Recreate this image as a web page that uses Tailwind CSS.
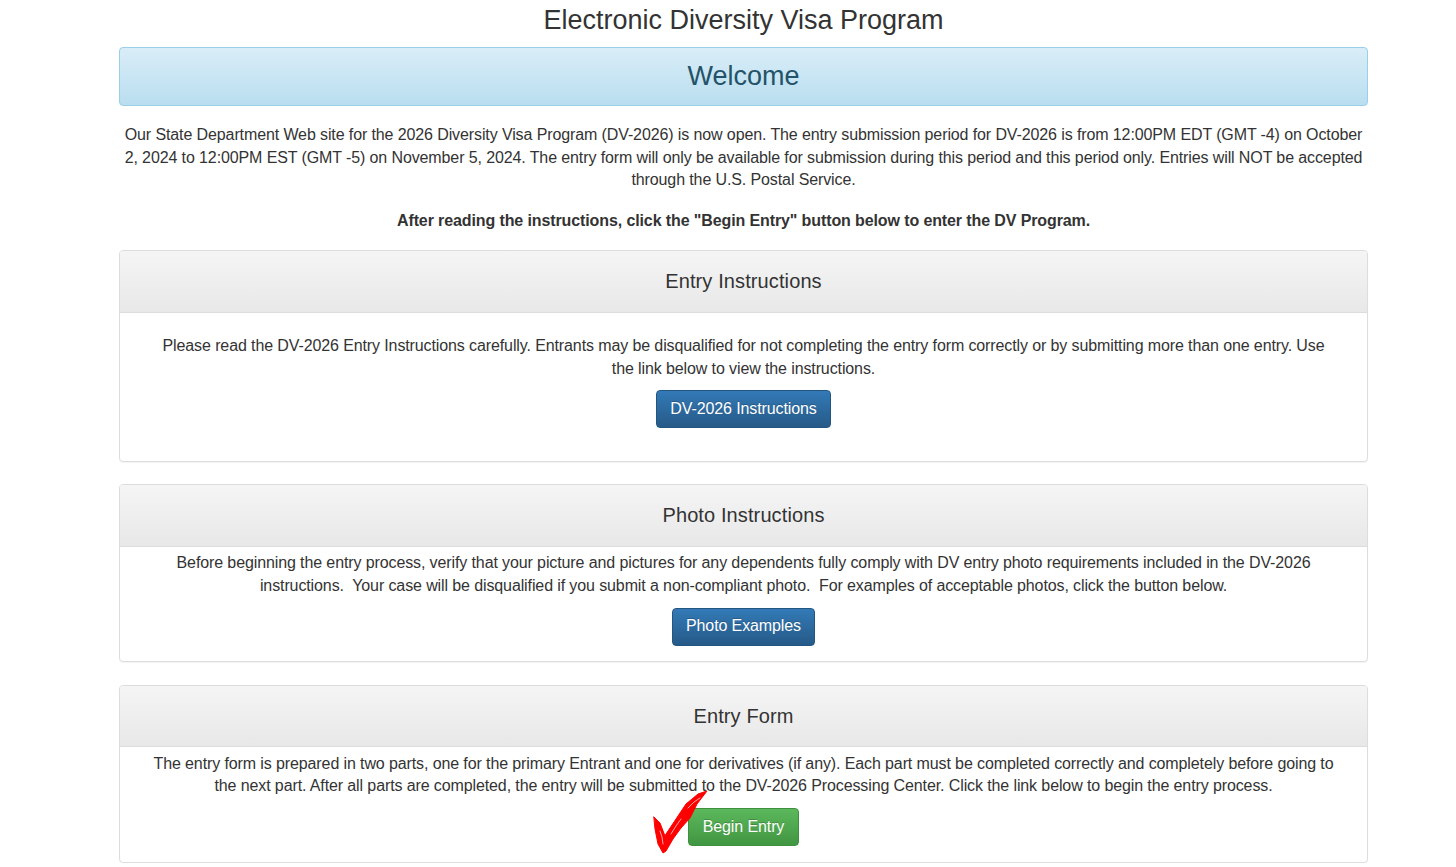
<!DOCTYPE html>
<html lang="en">
<head>
    <meta charset="UTF-8">
    <title>Electronic Diversity Visa Program</title>
    <script src="https://cdn.jsdelivr.net/npm/@tailwindcss/browser@4"></script>
</head>
<body class="bg-white text-[#333] text-[16px] leading-[22.86px] tracking-[-0.11px] font-['Liberation_Sans',Arial,sans-serif]">
    <div class="w-[1249px] ml-[119px] text-center">
        <!-- Title -->
        <h1 class="h-[47px] pt-[5px] text-[27px] leading-[31px] tracking-normal font-normal">Electronic Diversity Visa Program</h1>

        <!-- Welcome -->
        <div class="h-[59px] rounded-[4px] border border-[#9acfea] bg-gradient-to-b from-[#d9edf7] to-[#b9def0] text-[#245269] text-[27px] leading-[56px] tracking-normal">Welcome</div>

        <p class="mt-[18px] px-[1px] leading-[22.5px]">Our State Department Web site for the 2026 Diversity Visa Program (DV-2026) is now open. The entry submission period for DV-2026 is from 12:00PM EDT (GMT -4) on October 2, 2024 to 12:00PM EST (GMT -5) on November 5, 2024. The entry form will only be available for submission during this period and this period only. Entries will NOT be accepted through the U.S. Postal Service.</p>
        <p class="mt-[18.58px] font-bold">After reading the instructions, click the "Begin Entry" button below to enter the DV Program.</p>

        <!-- Entry Instructions -->
        <section class="mt-[17.06px] h-[212px] rounded-[4px] border border-[#ddd] shadow-[0_1px_1px_rgba(0,0,0,0.05)]">
            <h2 class="h-[62px] border-b border-[#ddd] bg-gradient-to-b from-[#f5f5f5] to-[#e8e8e8] text-[20px] leading-[60px] tracking-[0.11px] rounded-t-[3px]">Entry Instructions</h2>
            <div class="pt-[22px] px-[15px]">
                <p class="px-[20px]">Please read the DV-2026 Entry Instructions carefully. Entrants may be disqualified for not completing the entry form correctly or by submitting more than one entry. Use the link below to view the instructions.</p>
                <a class="mt-[9px] inline-block rounded-[4px] border border-[#245580] bg-gradient-to-b from-[#337ab7] to-[#265a88] px-[13.5px] pt-[7px] pb-[6px] text-white [text-shadow:0_-1px_0_rgba(0,0,0,0.2)]">DV-2026 Instructions</a>
            </div>
        </section>

        <!-- Photo Instructions -->
        <section class="mt-[22px] h-[178px] rounded-[4px] border border-[#ddd] shadow-[0_1px_1px_rgba(0,0,0,0.05)]">
            <h2 class="h-[62px] border-b border-[#ddd] bg-gradient-to-b from-[#f5f5f5] to-[#e8e8e8] text-[20px] leading-[60px] tracking-[0.11px] rounded-t-[3px]">Photo Instructions</h2>
            <div class="pt-[5px] px-[15px]">
                <p class="px-[20px]">Before beginning the entry process, verify that your picture and pictures for any dependents fully comply with DV entry photo requirements included in the DV-2026 instructions.&nbsp; Your case will be disqualified if you submit a non-compliant photo.&nbsp; For examples of acceptable photos, click the button below.</p>
                <a class="mt-[10px] inline-block rounded-[4px] border border-[#245580] bg-gradient-to-b from-[#337ab7] to-[#265a88] px-[13.5px] pt-[6.5px] pb-[6.5px] text-white [text-shadow:0_-1px_0_rgba(0,0,0,0.2)]">Photo Examples</a>
            </div>
        </section>

        <!-- Entry Form -->
        <section class="mt-[23px] h-[178px] rounded-[4px] border border-[#ddd] shadow-[0_1px_1px_rgba(0,0,0,0.05)]">
            <h2 class="h-[61px] border-b border-[#ddd] bg-gradient-to-b from-[#f5f5f5] to-[#e8e8e8] text-[20px] leading-[60px] tracking-[0.11px] rounded-t-[3px]">Entry Form</h2>
            <div class="pt-[6px] px-[15px]">
                <p class="px-[15px] leading-[22.5px]">The entry form is prepared in two parts, one for the primary Entrant and one for derivatives (if any). Each part must be completed correctly and completely before going to the next part. After all parts are completed, the entry will be submitted to the DV-2026 Processing Center. Click the link below to begin the entry process.</p>
                <div class="relative mt-[10px] inline-block">
                    <a class="inline-block rounded-[4px] border border-[#3e8f3e] bg-gradient-to-b from-[#5cb85c] to-[#419641] px-[14px] pt-[7px] pb-[6px] text-white [text-shadow:0_-1px_0_rgba(0,0,0,0.2)]">Begin Entry</a>
                    <!-- red tick over the button's left edge -->
                    <svg class="absolute left-[-36px] top-[-18px]" width="58" height="66" viewBox="0 0 58 66" fill="none" stroke-linecap="round" stroke-linejoin="round">
                        <path d="M2 27 L8 33 L13 46 L14 44 L24 29 L34 14 L46 4 L55 1 L45 14 L38 28 L29 38 L21 49 L14 61 L11 63 L6 54 L3 39 Z" fill="#f00" stroke="#f00" stroke-width="1"/>
                        <path d="M8 41 L10 47 L11 54 M19 44 L24 36 L29 29 M36 18 L42 12 L48 8" stroke="#fff" stroke-opacity="0.65" stroke-width="1"/>
                    </svg>
                </div>
            </div>
        </section>
    </div>
</body>
</html>
